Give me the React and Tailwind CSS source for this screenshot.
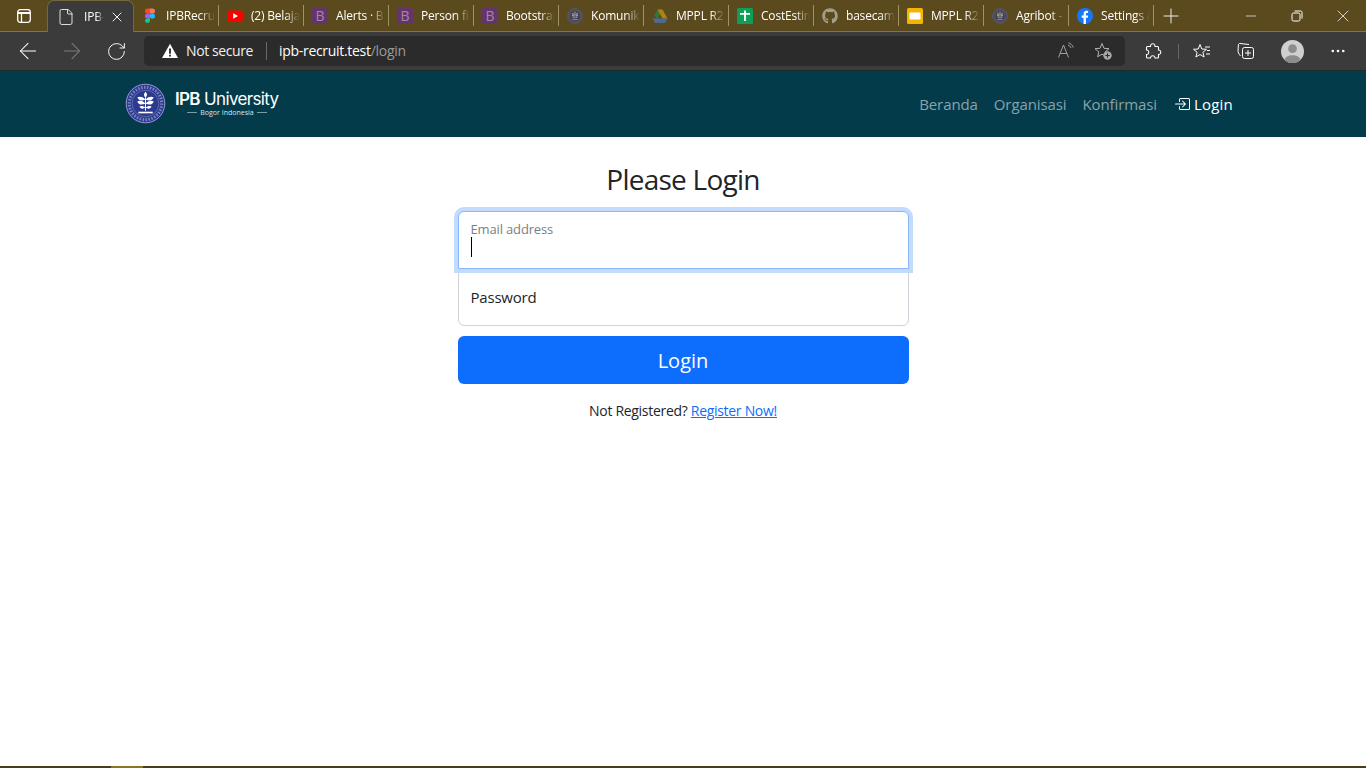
import { ArrowLeft, ArrowRight, RotateCw, File, X, Plus, Minus, MoreHorizontal } from 'lucide-react'
import { BsBoxArrowInRight } from 'react-icons/bs'
import { FaGithub } from 'react-icons/fa'

const IpbSeal = ({ size = 16 }) => (
  <svg width={size} height={size} viewBox="0 0 40 40">
    <circle cx="20" cy="20" r="19.5" fill="#2b3a8f" />
    <circle cx="20" cy="20" r="18.8" fill="none" stroke="#c9cde6" strokeWidth="0.6" />
    <circle cx="20" cy="20" r="13" fill="none" stroke="#8d96cc" strokeWidth="0.5" />
    <circle cx="20" cy="20" r="15.8" fill="none" stroke="#8d96cc" strokeWidth="3" strokeDasharray="1.5 1.4" opacity="0.8" />
    <path d="M20 8.500c2 2 2 4 0 6-2-2-2-4 0-6zM20 16c3-3 6-3 8-2-1 3-4 4-8 2zM20 16c-3-3-6-3-8-2 1 3 4 4 8 2zM20 20c3-3 6-3 8-2-1 3-4 4-8 2zM20 20c-3-3-6-3-8-2 1 3 4 4 8 2zM20 24c2-2 5-2 6-1-1 2-3 3-6 1zM20 24c-2-2-5-2-6-1 1 2 3 3 6 1z" fill="#fff" />
    <path d="M20 14v13" stroke="#fff" strokeWidth="1" />
    <path d="M13 28h14v1.600H13z" fill="#fff" />
  </svg>
)

const DimSeal = () => (
  <span className="opacity-50 flex">
    <IpbSeal size={16} />
  </span>
)

const BootstrapIcon = () => (
  <span className="w-4 h-4 rounded-[2px] bg-[#66336f] text-[#a08a9e] text-[14px] leading-4 text-center">B</span>
)

const FigmaIcon = () => (
  <svg width="16" height="16" viewBox="0 0 16 16">
    <path d="M3 3a2.600 2.600 0 0 1 2.600-2.600H8v5.200H5.600A2.600 2.600 0 0 1 3 3z" fill="#f24e1e" />
    <path d="M8 .4h2.400a2.600 2.600 0 0 1 0 5.200H8z" fill="#ff7262" />
    <path d="M3 8a2.600 2.600 0 0 1 2.600-2.600H8v5.200H5.600A2.600 2.600 0 0 1 3 8z" fill="#a259ff" />
    <circle cx="10.400" cy="8" r="2.600" fill="#1abcfe" />
    <path d="M3 13a2.600 2.600 0 0 1 2.600-2.600H8V13a2.600 2.600 0 0 1-5 0z" fill="#0acf83" />
  </svg>
)

const YoutubeIcon = () => (
  <svg width="16" height="16" viewBox="0 0 16 16">
    <rect y="2.500" width="16" height="11" rx="3" fill="#f00" />
    <path d="M6.200 5.200v5.600L11 8z" fill="#fff" />
  </svg>
)

const DriveIcon = () => (
  <svg width="16" height="16" viewBox="0 0 16 16" opacity="0.55">
    <path d="M5.500 1.500h5l-3 5.500L5 11.500 2.500 7z" fill="#0f9d58" />
    <path d="M5.500 1.500h5l5 9h-5z" fill="#f4b400" />
    <path d="M0.500 10.500l2.500 4.500h10l2.500-4.500z" fill="#4285f4" />
  </svg>
)

const SheetIcon = () => (
  <svg width="16" height="16" viewBox="0 0 16 16">
    <rect width="16" height="16" rx="1.500" fill="#0f9d58" />
    <path d="M3 5h10v1.700H3zM7.100 2.500h1.800V13H7.100z" fill="#fff" />
  </svg>
)

const SlidesIcon = () => (
  <svg width="16" height="16" viewBox="0 0 16 16">
    <rect width="16" height="16" rx="1.500" fill="#f4b400" />
    <rect x="2.500" y="4.500" width="11" height="7" fill="#fff" />
  </svg>
)

const FacebookIcon = () => (
  <svg width="16" height="16" viewBox="0 0 16 16">
    <circle cx="8" cy="8" r="8" fill="#1877f2" />
    <path d="M8.900 16V9.700h1.900l.3-2.300H8.900V6c0-.7.300-1.100 1.200-1.100h1V2.900c-.4-.1-1-.1-1.600-.1-1.700 0-2.900 1-2.900 2.900v1.700H4.700v2.300h1.900V16z" fill="#fff" />
  </svg>
)

const tabs = [
  { icon: <FigmaIcon />, title: 'IPBRecruit' },
  { icon: <YoutubeIcon />, title: '(2) Belajar' },
  { icon: <BootstrapIcon />, title: 'Alerts · Bo' },
  { icon: <BootstrapIcon />, title: 'Person fil' },
  { icon: <BootstrapIcon />, title: 'Bootstrap' },
  { icon: <DimSeal />, title: 'Komunikas' },
  { icon: <DriveIcon />, title: 'MPPL R2' },
  { icon: <SheetIcon />, title: 'CostEstim' },
  { icon: <FaGithub className="w-4 h-4 text-[#a39d8c]" />, title: 'basecamp' },
  { icon: <SlidesIcon />, title: 'MPPL R2' },
  { icon: <DimSeal />, title: 'Agribot -' },
  { icon: <FacebookIcon />, title: 'Settings &' },
]

function TabStrip() {
  return (
    <div className="h-8 shrink-0 flex bg-[#5b4a1e] border-b border-[#84734a] text-white text-[12px] tracking-[-0.2px]">
      <div className="w-[47px] flex items-center justify-center shrink-0">
        <svg width="16" height="16" viewBox="0 0 16 16" fill="none" stroke="#fff" strokeWidth="1.300">
          <rect x="1.700" y="1.700" width="12.600" height="12.600" rx="2.500" />
          <path d="M1.700 5h12.600" strokeWidth="2" />
          <path d="M5.500 5v9" />
        </svg>
      </div>
      <div className="w-[87px] h-8 shrink-0 flex items-center pl-[9px] bg-[#3b3b3b] rounded-t-[7px] border border-b-0 border-[#75683f]">
        <File className="w-[18px] h-[18px] shrink-0" strokeWidth={1.100} />
        <span className="ml-[9px] w-[20px] overflow-hidden whitespace-nowrap [mask-image:linear-gradient(to_right,black_60%,transparent)]">IPB-</span>
        <X className="w-4 h-4 ml-[5px] shrink-0" strokeWidth={1.400} />
      </div>
      <div className="flex">
        {tabs.map((tab, i) => (
          <div key={i} className="w-[85px] h-[31px] shrink-0 flex items-center pl-[8px] relative">
            <span className="w-4 h-4 shrink-0 flex">{tab.icon}</span>
            <span className="ml-[8px] w-[49px] overflow-hidden whitespace-nowrap [mask-image:linear-gradient(to_right,black_70%,transparent)]">{tab.title}</span>
            <span className="absolute right-0 top-[5px] h-[21px] w-px bg-[#a09360]" />
          </div>
        ))}
      </div>
      <div className="ml-[5px] flex items-center">
        <Plus className="w-6 h-6" strokeWidth={0.9} />
      </div>
      <div className="ml-auto flex items-center">
        <div className="w-[46px] flex justify-center"><Minus className="w-4 h-4" strokeWidth={1} /></div>
        <div className="w-[46px] flex justify-center">
          <svg width="12" height="12" viewBox="0 0 12 12" fill="none" stroke="#fff">
            <rect x="1" y="3" width="8" height="8" rx="1.500" />
            <path d="M3.500 1H9.500a1.500 1.500 0 0 1 1.500 1.500V8.500" />
          </svg>
        </div>
        <div className="w-[46px] flex justify-center"><X className="w-5 h-5" strokeWidth={0.9} /></div>
      </div>
    </div>
  )
}

function Toolbar() {
  return (
    <div className="h-[39px] shrink-0 flex items-center bg-[#3b3b3b] text-white border-b border-[#1f2a2c]">
      <div className="w-[144px] shrink-0 flex items-center pl-[6px]">
        <div className="w-[44px] flex justify-center"><ArrowLeft className="w-[26px] h-[26px]" strokeWidth={0.95} /></div>
        <div className="w-[44px] flex justify-center"><ArrowRight className="w-[26px] h-[26px] text-[#7d7d7d]" strokeWidth={0.95} /></div>
        <div className="w-[44px] flex justify-center"><RotateCw className="w-[21px] h-[21px]" strokeWidth={1.100} /></div>
      </div>
      <div className="w-[981px] h-[30px] shrink-0 rounded-[5px] bg-[#2b2b2b] flex items-center text-[14px]">
        <svg className="ml-[18px] shrink-0" width="16" height="16" viewBox="0 0 16 16">
          <path d="M8 .8 16 15H0z" fill="#fff" />
          <path d="M7.100 5.500h1.800v5.300H7.100zM7.100 11.700h1.800v1.700H7.100z" fill="#222" />
        </svg>
        <span className="ml-[8px] -mt-px text-[#f0f0f0] tracking-[-0.4px]">Not secure</span>
        <span className="ml-[13px] w-px h-[18px] bg-[#6a6a6a]" />
        <span className="ml-[12px] -mt-px text-white tracking-[-0.3px]">ipb-recruit.test</span>
        <span className="-mt-px text-[#9a9a9a] tracking-[-0.3px]">/login</span>
        <svg className="ml-auto" width="18" height="18" viewBox="0 0 18 18" fill="none" stroke="#a0a0a0" strokeWidth="1">
          <path d="M1.500 15.500 6.500 3l5 12.500M3.200 11.500h6.600" />
          <path d="M11 3c1.500.5 2.500 1.500 3 3M11.500 .8c2.300.7 4 2.300 4.800 4.700" />
        </svg>
        <svg className="ml-[18px] mr-[12px]" width="20" height="20" viewBox="0 0 20 20" fill="none">
          <path d="M9 2.500 11 7.300l5 .4-3.800 3.200 1.200 4.800L9 13.200l-4.400 2.500 1.200-4.800L2 7.700l5-.4z" stroke="#b5b5b5" strokeWidth="1" />
          <circle cx="14.500" cy="14.500" r="4.200" fill="#a8a8a8" />
          <path d="M14.500 12.300v4.400M12.300 14.500h4.400" stroke="#2b2b2b" strokeWidth="1" />
        </svg>
      </div>
      <div className="flex-1 flex items-center pl-[18px]">
        <svg width="20" height="20" viewBox="0 0 20 20" fill="none" stroke="#fff" strokeWidth="1.100">
          <path d="M7.500 4.500a2.300 2.300 0 0 1 4.500 0V5.500h2.500a1 1 0 0 1 1 1V9h.5a2.300 2.300 0 0 1 0 4.500h-.5V16a1 1 0 0 1-1 1H12v-.5a2.300 2.300 0 0 0-4.500 0v.5H4.500a1 1 0 0 1-1-1v-2.500H4a2.300 2.300 0 0 0 0-4.500h-.5V6.500a1 1 0 0 1 1-1h3z" />
        </svg>
        <span className="ml-[15px] w-px h-[15px] bg-[#666]" />
        <svg className="ml-[13px]" width="20" height="20" viewBox="0 0 20 20" fill="none" stroke="#fff" strokeWidth="1">
          <path d="M8 3.500 9.800 8l4.700.3-3.600 3 1.200 4.700L8 13.500 3.900 16l1.200-4.700-3.600-3L6.200 8z" />
          <path d="M13 6h5M15 9.500h3M14 13h4" />
        </svg>
        <svg className="ml-[24px]" width="20" height="20" viewBox="0 0 20 20" fill="none" stroke="#fff" strokeWidth="1">
          <rect x="6.500" y="6.500" width="11" height="11" rx="2" />
          <path d="M12 9v6M9 12h6" />
          <path d="M13 3.500 4 2.500c-1 0-1.500.5-1.600 1.500l-.4 6c0 1 .5 2.500 2.500 5" />
        </svg>
        <span className="ml-[25px] w-[23px] h-[23px] rounded-full bg-[#cfcfcf] overflow-hidden flex items-end justify-center">
          <svg width="23" height="23" viewBox="0 0 24 24">
            <circle cx="12" cy="9" r="4.500" fill="#8c8c8c" />
            <path d="M3 24c0-6 4-8 9-8s9 2 9 8z" fill="#8c8c8c" />
          </svg>
        </span>
        <MoreHorizontal className="ml-[25px] w-[18px] h-[18px]" strokeWidth={1.500} />
      </div>
    </div>
  )
}

function Navbar() {
  return (
    <nav className="h-[66px] shrink-0 bg-[#033b4a]">
      <div className="w-[1140px] h-full mx-auto px-3 flex items-center justify-between">
        <div className="flex items-center -mt-[1px]">
          <IpbSeal size={41} />
          <div className="ml-[9px] w-[104px] text-white -mt-[1px]">
            <div className="text-[17px] leading-[19px] whitespace-nowrap tracking-[-0.65px] font-['Inter',sans-serif]">
              <span className="font-semibold">IPB</span> University
            </div>
            <div className="flex items-center gap-[3px] px-[12px] text-[#dbe5e7] text-[7px] leading-[8px]">
              <span className="flex-1 h-px bg-[#7f9ca3]" />
              <span className="whitespace-nowrap">Bogor Indonesia</span>
              <span className="flex-1 h-px bg-[#7f9ca3]" />
            </div>
          </div>
        </div>
        <div className="flex items-center text-[15px] tracking-[-0.1px] text-[#8ba2aa]">
          <a className="px-2">Beranda</a>
          <a className="px-2">Organisasi</a>
          <a className="px-2">Konfirmasi</a>
          <a className="pl-[9px] pr-2 text-white flex items-center gap-[4px] tracking-[0.2px]">
            <BsBoxArrowInRight className="w-4 h-4" />
            Login
          </a>
        </div>
      </div>
    </nav>
  )
}

function LoginForm() {
  return (
    <main className="flex-1 bg-white pt-[20px] text-[#212529]">
      <div className="w-[451px] mx-auto">
        <h1 className="text-[28px] leading-[44px] text-center tracking-[-0.75px]">Please Login</h1>
        <div className="mt-[10px] relative z-10 h-[58px] rounded-t-[6px] border border-[#86b7fe] bg-white shadow-[0_0_0_4px_#c2dbfe] px-3 pt-[8px]">
          <div className="text-[13px] leading-[18px] tracking-[-0.15px] text-[#7a7f84]">Email address</div>
          <div className="w-px h-5 bg-black -mt-px" />
        </div>
        <div className="h-[58px] -mt-px rounded-b-[6px] border border-[#ced4da] bg-white px-3 flex items-center text-[15px] tracking-[-0.2px]">
          Password
        </div>
        <button className="mt-[10px] w-full h-[48px] pt-[2px] rounded-[6px] bg-[#0d6efd] text-white text-[20px]">Login</button>
        <p className="mt-[17px] text-center text-[14px] leading-[20px] tracking-[-0.3px]">
          Not Registered? <a className="text-[#0d6efd] underline">Register Now!</a>
        </p>
      </div>
    </main>
  )
}

export default function App() {
  return (
    <div className="h-screen overflow-hidden flex flex-col font-['Open_Sans',sans-serif]">
      <TabStrip />
      <Toolbar />
      <Navbar />
      <LoginForm />
      <div className="h-[2px] shrink-0 bg-[#4a3c18] flex">
        <div className="ml-[111px] w-[32px] bg-[#8a7425]" />
      </div>
    </div>
  )
}
